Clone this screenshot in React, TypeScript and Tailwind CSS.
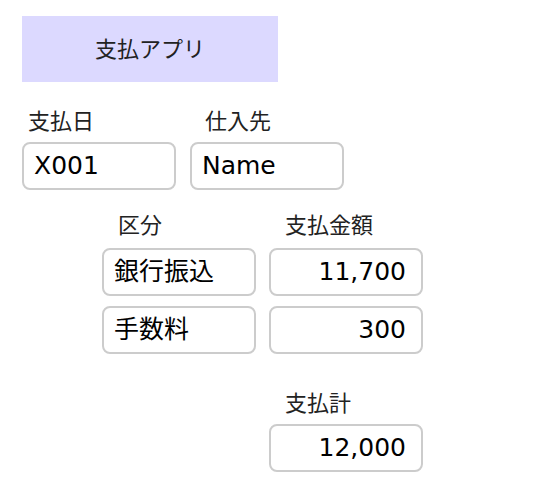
const font = "font-['DejaVu_Sans','Noto_Sans_CJK_JP',sans-serif]"

function Label({ text, indent = "pl-4" }: { text: string; indent?: string }) {
  return <div className={`h-[28px] text-[22px] leading-[28px] text-[#222] ${indent}`}>{text}</div>
}

function Field({ value, right = false }: { value: string; right?: boolean }) {
  return (
    <div
      className={`h-[48px] w-[154px] rounded-lg border-2 border-[#cccccc] bg-white flex items-center text-[25px] text-black ${
        right ? "justify-end pr-[15px]" : "pl-[10px]"
      }`}
    >
      {value}
    </div>
  )
}

export default function App() {
  return (
    <div className={`min-h-screen bg-white pl-[22px] pt-[16px] ${font}`}>
      <div className="w-[256px] h-[66px] bg-[#dcd9ff] flex items-center justify-center text-[22px] text-[#222]">
        支払アプリ
      </div>

      <div className="flex gap-[14px] mt-[26px]">
        <div className="flex flex-col gap-[6px]">
          <Label text="支払日" indent="pl-[6px]" />
          <Field value="X001" />
        </div>
        <div className="flex flex-col gap-[6px]">
          <Label text="仕入先" indent="pl-[15px]" />
          <Field value="Name" />
        </div>
      </div>

      <div className="ml-[80px] mt-[22px] grid grid-cols-[154px_154px] gap-x-[13px]">
        <div className="flex flex-col gap-[10px]">
          <div className="mb-[-2px]">
            <Label text="区分" />
          </div>
          <Field value="銀行振込" />
          <Field value="手数料" />
        </div>
        <div className="flex flex-col gap-[10px]">
          <div className="mb-[-2px]">
            <Label text="支払金額" />
          </div>
          <Field value="11,700" right />
          <Field value="300" right />
          <div className="mt-[26px] mb-[-4px]">
            <Label text="支払計" />
          </div>
          <Field value="12,000" right />
        </div>
      </div>
    </div>
  )
}
